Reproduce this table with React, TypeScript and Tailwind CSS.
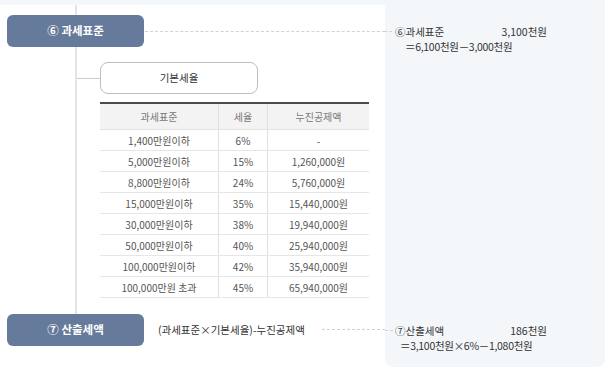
import React from "react";

const rows = [
  ["1,400만원이하", "6%", "-"],
  ["5,000만원이하", "15%", "1,260,000원"],
  ["8,800만원이하", "24%", "5,760,000원"],
  ["15,000만원이하", "35%", "15,440,000원"],
  ["30,000만원이하", "38%", "19,940,000원"],
  ["50,000만원이하", "40%", "25,940,000원"],
  ["100,000만원이하", "42%", "35,940,000원"],
  ["100,000만원 초과", "45%", "65,940,000원"],
];

function StepButton({ label }: { label: string }) {
  return (
    <div className="relative z-10 flex h-[32px] w-[137px] shrink-0 items-center justify-center rounded-[6px] bg-[#667a9b] text-[11.5px] font-bold text-white">
      {label}
    </div>
  );
}

export default function App() {
  return (
    <div
      className="flex h-[370px] w-[605px] flex-col overflow-hidden bg-white text-[#333]"
      style={{ fontFamily: '"Noto Sans CJK KR", "Noto Sans", sans-serif' }}
    >
      {/* top strip */}
      <div className="h-[5px] w-full shrink-0 bg-[#f4f7fa]" />

      <div className="flex flex-1">
        {/* left diagram */}
        <div className="relative flex w-[385px] shrink-0 flex-col">
          {/* vertical connector */}
          <div className="absolute left-[75px] top-0 h-[309px] w-[2px] bg-[#e4e4e4]" />

          {/* step 6 */}
          <div className="mt-[10px] flex items-center pl-[7px]">
            <StepButton label="⑥ 과세표준" />
            <div className="ml-[1px] flex-1 border-t border-dashed border-[#cfd3d8]" />
          </div>

          {/* basic rate box */}
          <div className="mt-[15px] flex items-center pl-[77px]">
            <div className="h-px w-[23px] bg-[#cccccc]" />
            <div className="flex h-[32px] w-[158px] items-center justify-center rounded-[8px] border border-[#bdbdbd] bg-white text-[10.5px] text-[#333]">
              기본세율
            </div>
          </div>

          {/* rate table */}
          <div className="ml-[100px] mt-[8px] w-[269px] border-t-2 border-[#4a4a4a] text-[10px]">
            <div className="flex h-[26px] items-center border-b border-[#e2e2e2] bg-[#f3f3f3] text-[#777]">
              <div className="w-[118px] text-center">과세표준</div>
              <div className="flex h-full w-[50px] items-center justify-center border-x border-[#e0e0e0]">세율</div>
              <div className="flex-1 text-center">누진공제액</div>
            </div>
            {rows.map((r) => (
              <div key={r[0]} className="flex h-[21px] items-center border-b border-[#e6e6e6] text-[#555]">
                <div className="w-[118px] text-center">{r[0]}</div>
                <div className="flex h-full w-[50px] items-center justify-center border-x border-[#e0e0e0]">{r[1]}</div>
                <div className="flex-1 text-center">{r[2]}</div>
              </div>
            ))}
          </div>

          {/* step 7 */}
          <div className="mt-[16px] flex items-center pl-[7px]">
            <StepButton label="⑦ 산출세액" />
            <div className="ml-[14px] text-[10.5px] text-[#333]">(과세표준×기본세율)-누진공제액</div>
            <div className="ml-[17px] mt-[-2px] flex-1 border-t border-dashed border-[#cfd3d8]" />
          </div>
        </div>

        {/* result panel */}
        <div className="mb-[3px] flex flex-1 flex-col justify-between rounded-b-[8px] bg-[#f4f7fa] pb-[14px] pt-[19px] text-[10.5px] leading-[15px] text-[#333]">
          <div>
            <div className="flex items-center">
              <div className="w-[7px] border-t border-dashed border-[#cfd3d8]" />
              <div className="ml-[3px] flex w-[152px] justify-between">
                <span>⑥과세표준</span>
                <span>3,100천원</span>
              </div>
            </div>
            <div className="pl-[20px] tracking-[-0.3px]">＝6,100천원－3,000천원</div>
          </div>
          <div>
            <div className="flex items-center">
              <div className="w-[8px] border-t border-dashed border-[#cfd3d8]" />
              <div className="ml-[2px] flex w-[152px] justify-between">
                <span>⑦산출세액</span>
                <span>186천원</span>
              </div>
            </div>
            <div className="pl-[15px] tracking-[-0.3px]">＝3,100천원×6%－1,080천원</div>
          </div>
        </div>
      </div>
    </div>
  );
}
